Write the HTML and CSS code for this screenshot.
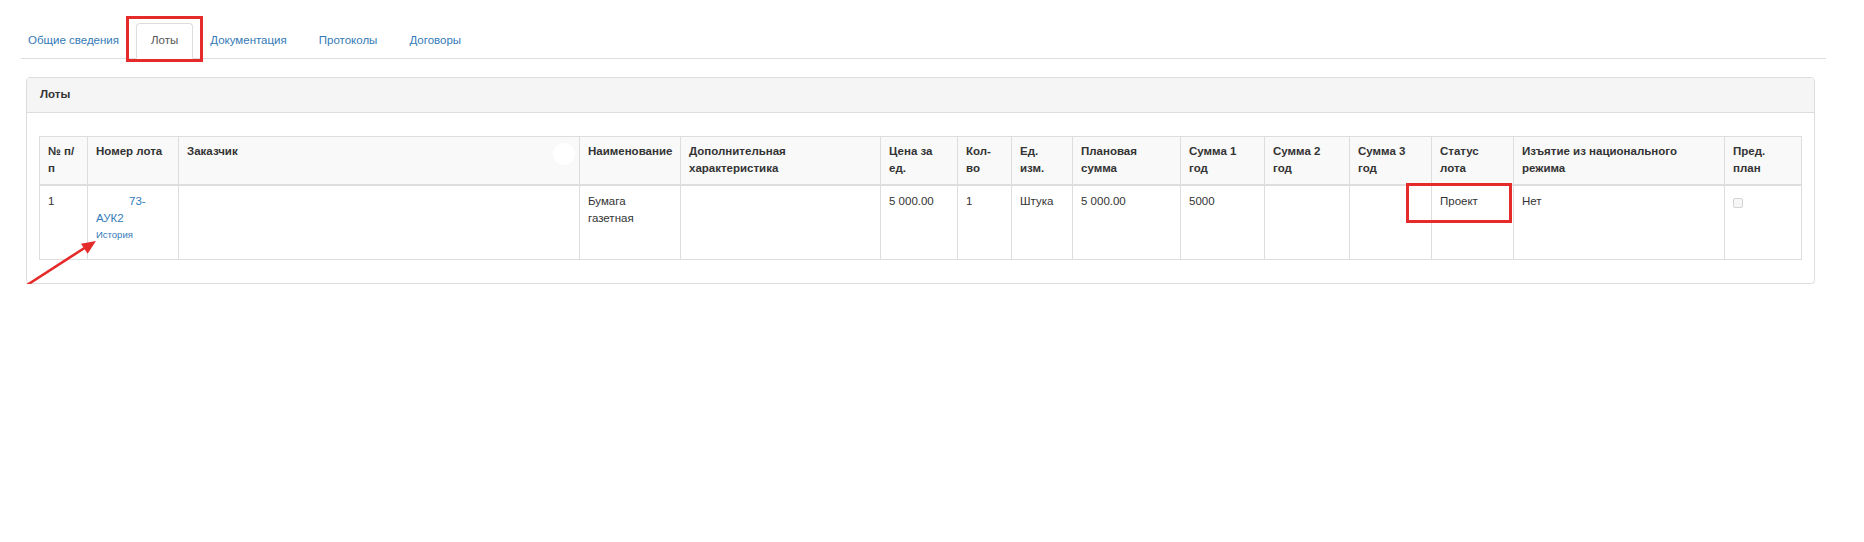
FILE: index.html
```html
<!DOCTYPE html>
<html lang="ru">
<head>
<meta charset="UTF-8">
<title>Лоты</title>
<link rel="stylesheet" href="styles.css">
</head>
<body>

<div class="tabs">
  <a class="tab first" href="#">Общие сведения</a>
  <a class="tab active" href="#">Лоты</a>
  <a class="tab" href="#">Документация</a>
  <a class="tab" href="#">Протоколы</a>
  <a class="tab" href="#">Договоры</a>
</div>

<div class="panel">
  <div class="panel-heading">Лоты</div>
  <div class="panel-body">
    <table class="lots">
      <colgroup>
        <col><col><col><col><col><col><col><col><col><col><col><col><col><col><col>
      </colgroup>
      <thead>
        <tr>
          <th>№ п/<br>п</th>
          <th>Номер лота</th>
          <th class="zakazchik">Заказчик <span class="kruzhok"></span></th>
          <th>Наименование</th>
          <th>Дополнительная<br>характеристика</th>
          <th>Цена за<br>ед.</th>
          <th>Кол-<br>во</th>
          <th>Ед.<br>изм.</th>
          <th>Плановая<br>сумма</th>
          <th>Сумма 1<br>год</th>
          <th>Сумма 2<br>год</th>
          <th>Сумма 3<br>год</th>
          <th>Статус<br>лота</th>
          <th>Изъятие из национального<br>режима</th>
          <th>Пред.<br>план</th>
        </tr>
      </thead>
      <tbody>
        <tr>
          <td>1</td>
          <td>
            <a class="nomer" href="#"><span class="skryto"></span>73-<br>АУК2</a>
            <a class="istoriya" href="#">История</a>
          </td>
          <td></td>
          <td>Бумага<br>газетная</td>
          <td></td>
          <td>5 000.00</td>
          <td>1</td>
          <td>Штука</td>
          <td>5 000.00</td>
          <td>5000</td>
          <td></td>
          <td></td>
          <td class="status">Проект</td>
          <td>Нет</td>
          <td><input type="checkbox" class="chk" disabled></td>
        </tr>
      </tbody>
    </table>
  </div>
</div>

<!-- стрелка-пометка -->
<svg class="strelka" width="90" height="60" viewBox="0 0 90 60">
  <line x1="7" y1="50" x2="66" y2="12" stroke="#e52a2a" stroke-width="2.6"/>
  <polygon points="76,6 67.6,18.7 61,8.7" fill="#e52a2a"/>
</svg>

</body>
</html>
```

FILE: styles.css
```css
body {
  margin: 0;
  background: #fff;
  font-family: "Liberation Sans", Arial, sans-serif;
  font-size: 11.5px;
  line-height: 17px;
  color: #333;
  position: relative;
}

a {
  color: #337ab7;
  text-decoration: none;
}

/* вкладки */
.tabs {
  display: flex;
  margin: 23px 38px 0 21px;
  border-bottom: 1px solid #ddd;
}
.tab {
  position: relative;
  padding: 8px 14px 9px;
  margin-right: 2px;
  margin-bottom: -1px;
  border: 1px solid transparent;
  border-radius: 4px 4px 0 0;
}
.tab.first {
  margin-left: -8px;
}
.tab.active {
  color: #555;
  background: #fff;
  border-color: #ddd;
  border-bottom-color: transparent;
}
.tab.active::after {
  content: "";
  position: absolute;
  left: -11px;
  top: -8px;
  width: 77px;
  height: 46px;
  border: 3px solid #e52a2a;
  box-sizing: border-box;
}

/* панель */
.panel {
  margin: 18px 49px 0 26px;
  border: 1px solid #ddd;
  border-radius: 4px;
  box-shadow: 0 1px 1px rgba(0,0,0,0.05);
}
.panel-heading {
  background: #f5f5f5;
  border-bottom: 1px solid #ddd;
  padding: 8px 13px 9px;
  font-weight: bold;
  border-radius: 3px 3px 0 0;
}
.panel-body {
  padding: 23px 13px 23px 12px;
}

/* таблица лотов */
.lots {
  width: 1762px;
  table-layout: fixed;
  border-collapse: collapse;
  border: 1px solid #ddd;
}
.lots col:nth-child(1) { width: 48px; }
.lots col:nth-child(2) { width: 91px; }
.lots col:nth-child(3) { width: 401px; }
.lots col:nth-child(4) { width: 101px; }
.lots col:nth-child(5) { width: 200px; }
.lots col:nth-child(6) { width: 77px; }
.lots col:nth-child(7) { width: 54px; }
.lots col:nth-child(8) { width: 61px; }
.lots col:nth-child(9) { width: 108px; }
.lots col:nth-child(10) { width: 84px; }
.lots col:nth-child(11) { width: 85px; }
.lots col:nth-child(12) { width: 82px; }
.lots col:nth-child(13) { width: 82px; }
.lots col:nth-child(14) { width: 211px; }
.lots col:nth-child(15) { width: 77px; }

.lots th, .lots td {
  border: 1px solid #ddd;
  padding: 7px 8px;
  text-align: left;
  vertical-align: top;
}
.lots th {
  background: #f9f9f9;
  border-bottom-width: 2px;
  height: 31px;
  padding-top: 6px;
}
.lots td {
  height: 59px;
}

.zakazchik {
  position: relative;
}
.kruzhok {
  position: absolute;
  right: 4px;
  top: 6px;
  width: 22px;
  height: 22px;
  border-radius: 50%;
  background: #fff;
}

.nomer {
  display: block;
}
.skryto {
  display: inline-block;
  width: 33px;
}
.istoriya {
  display: block;
  font-size: 9.5px;
  line-height: 14px;
  margin-top: 1px;
}

.status {
  position: relative;
}
.status::after {
  content: "";
  position: absolute;
  left: -26px;
  top: -3px;
  width: 106px;
  height: 40px;
  border: 3px solid #e52a2a;
  box-sizing: border-box;
}

.chk {
  appearance: none;
  width: 10px;
  height: 10px;
  margin: 5px 0 0 0;
  border: 1px solid #d4d4d4;
  border-radius: 2px;
  background: #f6f6f6;
}

.strelka {
  position: absolute;
  left: 20px;
  top: 235px;
}
```
